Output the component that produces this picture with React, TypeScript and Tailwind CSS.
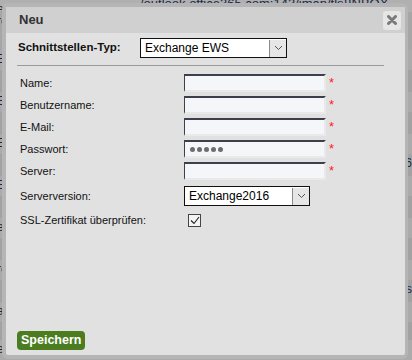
import React from "react"

const bgRows = [
  { h: 12, c: "bg-[#b0b0b0]", t: "er", r: "" },
  { h: 38, c: "bg-[#a6a6a6]", t: "re", r: "" },
  { h: 20, c: "bg-[#ababab]", t: "E", r: "" },
  { h: 22, c: "bg-[#a2a2a2]", t: "", r: "" },
  { h: 20, c: "bg-[#ababab]", t: "E", r: "" },
  { h: 22, c: "bg-[#a2a2a2]", t: "", r: "" },
  { h: 20, c: "bg-[#ababab]", t: "E", r: "" },
  { h: 22, c: "bg-[#a2a2a2]", t: "", r: "16" },
  { h: 20, c: "bg-[#ababab]", t: "E", r: "" },
  { h: 22, c: "bg-[#a2a2a2]", t: "", r: "" },
  { h: 20, c: "bg-[#ababab]", t: "ee", r: "" },
  { h: 22, c: "bg-[#a2a2a2]", t: "", r: "" },
  { h: 20, c: "bg-[#ababab]", t: "re", r: "" },
  { h: 22, c: "bg-[#a2a2a2]", t: "", r: "s" },
  { h: 20, c: "bg-[#ababab]", t: "a", r: "" },
  { h: 18, c: "bg-[#a2a2a2]", t: "", r: "" },
  { h: 20, c: "bg-[#ababab]", t: "ee", r: "" },
  { h: 6, c: "bg-[#a6a6a6]", t: "", r: "" },
  { h: 36, c: "bg-[#5c5c5c]", t: "", r: "" },
  { h: 20, c: "bg-[#a9a9a9]", t: "", r: "" },
]

function Chevron() {
  return (
    <svg width="9" height="6" viewBox="0 0 9 6">
      <path d="M1 1l3.5 3.5L8 1" fill="none" stroke="#555" strokeWidth="1" />
    </svg>
  )
}

function Select({ value, w }: { value: string; w: string }) {
  return (
    <div className={`${w} h-[20px] border-[1.5px] border-[#111] bg-white flex items-center`}>
      <span className="flex-1 pl-[4px] text-[12px] text-black leading-none">{value}</span>
      <div className="w-[17px] h-[17px] bg-[#e6e6e6] border-l border-[#8a8a8a] flex items-center justify-center">
        <Chevron />
      </div>
    </div>
  )
}

function Field({ pw }: { pw?: boolean }) {
  return (
    <div className="flex items-start">
      <div className="w-[142px] h-[18px] bg-[#f5f6fa] border-t-2 border-l border-t-[#3e3f4d] border-l-[#3e3f4d] border-b-2 border-r-2 border-b-[#e9e9e9] border-r-[#e9e9e9] flex items-center pl-[5px] gap-[2px]">
        {pw &&
          [0, 1, 2, 3, 4].map((i) => (
            <span key={i} className="w-[5px] h-[5px] rounded-full bg-[#6d6d70]" />
          ))}
      </div>
      <span className="ml-[3px] text-[13px] text-[#ff2020] leading-none mt-[2px]">*</span>
    </div>
  )
}

export default function App() {
  const rows = [
    { label: "Name:", pw: false },
    { label: "Benutzername:", pw: false },
    { label: "E-Mail:", pw: false },
    { label: "Passwort:", pw: true },
    { label: "Server:", pw: false },
  ]

  return (
    <div
      className="relative w-[412px] h-[360px] overflow-hidden bg-[#a9a9a9]"
      style={{ fontFamily: '"Liberation Sans", Arial, sans-serif' }}
    >
      {/* page behind the overlay */}
      <div className="flex flex-col">
        {bgRows.map((r, i) => (
          <div key={i} className={`${r.c} flex justify-between text-[12px] text-[#1c2a45] leading-none`} style={{ height: r.h }}>
            <span className="-ml-[3px] mt-[3px]">{r.t}</span>
            <span className="mt-[3px]">{r.r}</span>
          </div>
        ))}
      </div>
      <div className="absolute left-[140px] -top-[6px] text-[13px] text-[#1c2a45]">
        {"/outlook.office365.com:143/imap/tls}INBOX"}
      </div>

      {/* dialog */}
      <div className="absolute left-[2px] top-[3px] w-[406px] h-[356px] rounded-[6px] bg-[#b5b5b5] p-[4px] pr-[3px]">
        <div className="flex flex-col h-full bg-[#e1e1e1] rounded-[2px]">
          <div className="h-[26px] bg-[#d0d0d0] flex items-center justify-between pl-[13px] pr-[4px]">
            <span className="text-[13px] font-bold text-[#333]">Neu</span>
            <div className="w-[18px] h-[19px] rounded-[3px] bg-[#e6e6e6] flex items-center justify-center">
              <svg width="10" height="10" viewBox="0 0 10 10">
                <path d="M1.5 1.5l7 7M8.5 1.5l-7 7" stroke="#7a7a7a" strokeWidth="3" strokeLinecap="round" />
              </svg>
            </div>
          </div>

          <div className="flex-1 flex flex-col px-[11px] pt-[5px] text-[11px] text-[#111]">
            <div className="flex items-center h-[20px]">
              <span className="w-[123px] font-bold text-[11.5px] pl-[1px]">Schnittstellen-Typ:</span>
              <Select value="Exchange EWS" w="w-[147px]" />
            </div>
            <div className="mt-[7px] mr-[10px] h-px bg-[#9a9a9a]" />

            <div className="flex flex-col gap-[4px] mt-[8px] pl-[3px]">
              {rows.map((r) => (
                <div key={r.label} className="flex items-center h-[18px]">
                  <span className="w-[164px]">{r.label}</span>
                  <Field pw={r.pw} />
                </div>
              ))}
              <div className="flex items-center h-[20px] mt-[2px]">
                <span className="w-[164px]">Serverversion:</span>
                <Select value="Exchange2016" w="w-[126px]" />
              </div>
              <div className="flex items-center h-[18px] mt-[1px]">
                <span className="w-[168px]">SSL-Zertifikat überprüfen:</span>
                <div className="w-[13px] h-[13px] border border-[#444] bg-[#f4f4f4] flex items-center justify-center">
                  <svg width="10" height="9" viewBox="0 0 10 9">
                    <path d="M1 4.5l3 3L9 1" fill="none" stroke="#222" strokeWidth="1.1" />
                  </svg>
                </div>
              </div>
            </div>

            <div className="mt-auto mb-[5px]">
              <button className="h-[19px] px-[4px] rounded-[4px] bg-[#4b7d20] text-white font-bold text-[12.5px] leading-none">
                Speichern
              </button>
            </div>
          </div>
        </div>
      </div>
    </div>
  )
}
